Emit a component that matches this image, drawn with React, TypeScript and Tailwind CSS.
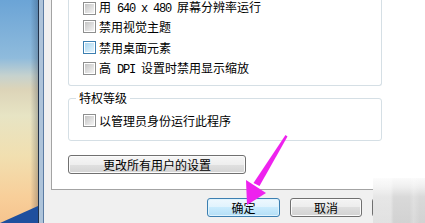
import React from 'react';

const Box: React.FC<{ hot?: boolean }> = ({ hot }) => (
  <span
    className={
      hot
        ? 'block w-[13px] h-[13px] shrink-0 border border-[#3c7fb1] bg-white p-px'
        : 'block w-[13px] h-[13px] shrink-0 border border-[#8e8f8f] bg-white p-px'
    }
  >
    <span
      className={
        hot
          ? 'block w-full h-full bg-[linear-gradient(135deg,#a9d6f0,#e4f4fd)]'
          : 'block w-full h-full bg-[linear-gradient(135deg,#c4c4c4,#f4f4f4)]'
      }
    />
  </span>
);

// Latin text in the dialog uses half-width cells
const Mono: React.FC<{ children: React.ReactNode }> = ({ children }) => (
  <span className="font-['Liberation_Mono',monospace] tracking-[-1.2px] whitespace-pre">{children}</span>
);

const Btn: React.FC<{ w: string; main?: boolean; children?: React.ReactNode }> = ({ w, main, children }) => (
  <div
    className={
      main
        ? `${w} h-[19px] flex items-center justify-center rounded-[3px] border border-[#3c7fb1] bg-[linear-gradient(to_bottom,#eef8fe_0%,#e0f3fd_50%,#c9ebfd_50%,#b4def6_100%)] shadow-[inset_0_0_0_1px_#dff3fd]`
        : `${w} h-[19px] flex items-center justify-center rounded-[3px] border border-[#707070] bg-[linear-gradient(to_bottom,#f4f4f4_0%,#ececec_50%,#dedede_50%,#d2d2d2_100%)] shadow-[inset_0_0_0_1px_#fbfbfb]`
    }
  >
    <span className="leading-[14px]">{children}</span>
  </div>
);

const App: React.FC = () => {
  return (
    <div className="relative w-[425px] h-[223px] overflow-hidden flex text-[12px] leading-[14px] text-black font-['Noto_Sans_CJK_SC',sans-serif]">
      {/* desktop wallpaper */}
      <div className="relative w-[38px] h-full shrink-0 bg-[linear-gradient(to_right,rgba(0,0,0,0)_80%,rgba(20,30,50,0.25)_100%),linear-gradient(to_bottom,#6ba4d6_0%,#8fbbdc_26%,#c6d2ce_34%,#dcd4b8_40%,#e7e4c4_52%,#f1dfb0_70%,#f8cf9a_88%,#f6c48e_100%)]">
        <svg className="absolute inset-0" width="38" height="223" viewBox="0 0 38 223">
          <polygon points="0,223 38,206 38,223" fill="#1e4f9e" />
        </svg>
      </div>

      {/* window frame */}
      <div className="w-[6px] h-full shrink-0 border-l border-l-[#22324a] border-r border-r-[#5b7ca3] bg-[#aec4da]" />

      {/* dialog */}
      <div className="flex-1 flex flex-col bg-[#f0f0f0] pl-[7px]">
        <div className="h-[190px] flex flex-col bg-white border-l border-b border-[#a3a3a3]">
          <div className="ml-[16px] w-[314px] border-x border-b border-[#d5dfe5] rounded-b-[3px] pl-[14px] pb-[6px]">
            <div className="h-[16px] flex items-center gap-[3px]">
              <Box />
              <span>
                用<Mono> 640 x 480 </Mono>屏幕分辨率运行
              </span>
            </div>
            <div className="h-[21px] flex items-center gap-[3px]">
              <Box />
              <span>禁用视觉主题</span>
            </div>
            <div className="h-[21px] flex items-center gap-[3px]">
              <Box hot />
              <span>禁用桌面元素</span>
            </div>
            <div className="h-[21px] flex items-center gap-[3px]">
              <Box />
              <span>
                高<Mono> DPI </Mono>设置时禁用显示缩放
              </span>
            </div>
          </div>

          <fieldset className="ml-[16px] mt-[6px] w-[314px] border border-[#d5dfe5] rounded-[3px] pl-[14px] pb-[9px]">
            <legend className="ml-[-7px] px-[3px] leading-[12px]">特权等级</legend>
            <div className="mt-[6px] h-[21px] flex items-center gap-[3px]">
              <Box />
              <span>以管理员身份运行此程序</span>
            </div>
          </fieldset>

          <div className="ml-[16px] mt-[14px] w-[178px] h-[19px] flex items-center justify-center rounded-[3px] border border-[#707070] bg-[linear-gradient(to_bottom,#f6f6f6_0%,#eeeeee_50%,#e0e0e0_50%,#d4d4d4_100%)] shadow-[inset_0_0_0_1px_#fbfbfb]">
            <span className="leading-[14px]">更改所有用户的设置</span>
          </div>
        </div>

        <div className="flex gap-[10px] pl-[156px] pt-[8px]">
          <Btn w="w-[73px]" main>确定</Btn>
          <Btn w="w-[72px]">取消</Btn>
          <Btn w="w-[73px]">应用</Btn>
        </div>
      </div>

      {/* blurred window lying over the corner */}
      <div className="absolute left-[373px] top-[178px] right-0 bottom-0 bg-[linear-gradient(to_right,rgba(255,255,255,0.35)_0%,rgba(255,255,255,0.35)_34%,rgba(255,255,255,0)_40%,rgba(255,255,255,0)_70%,rgba(255,255,255,0.2)_78%,rgba(255,255,255,0)_90%),linear-gradient(to_bottom,#fafafa_0%,#eeeeee_20%,#d9d9d9_42%,#d2d2d2_100%)]" />

      {/* annotation arrow */}
      <svg className="absolute inset-0 pointer-events-none" width="425" height="223" viewBox="0 0 425 223">
        <polygon points="285.5,135 287.5,136.5 259.5,186 253.5,183" fill="#ee22ee" />
        <polygon points="246,180 266,193 247,205" fill="#ee22ee" />
      </svg>
    </div>
  );
};

export default App;
